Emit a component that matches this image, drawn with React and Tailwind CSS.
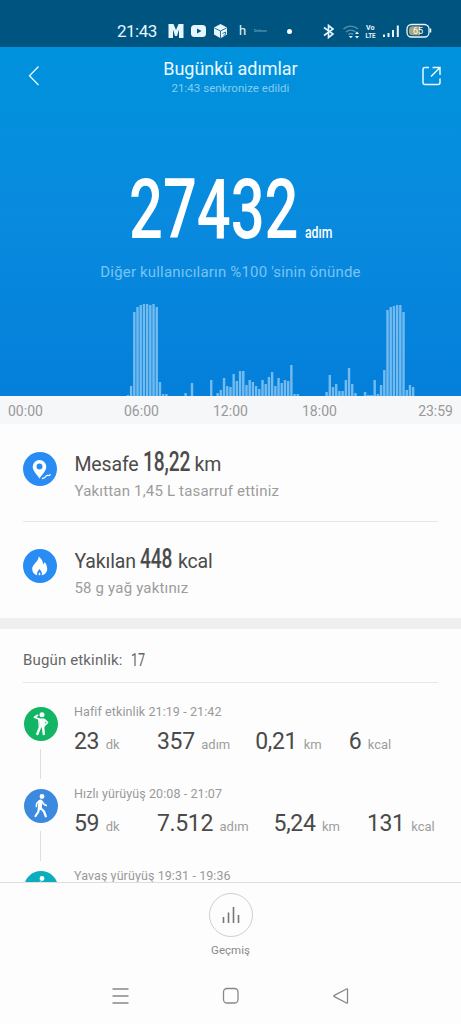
import clsx from "clsx";

const BAR_STEP = 3.205;

// [slot, heights...] runs of consecutive ten-minute bars
const RUNS = [
    [40, 1, 10, 84, 89, 91, 92, 92, 91, 92, 89, 14, 2, 2],
    [58, 3],
    [60, 13],
    [66, 16],
    [68, 3, 6, 18, 10, 9, 22, 15, 25, 25, 11, 16, 14, 10, 7, 16, 12, 19, 24, 10, 18, 13, 16, 15, 31, 2, 2],
    [102, 4, 21, 9, 12, 5, 5, 16, 28, 12, 3],
    [114, 4, 1, 1, 16, 2, 11, 26, 86, 89, 90, 91, 91, 84, 6, 11, 9],
];

const BARS = RUNS.flatMap(([start, ...heights]) => heights.map((h, i) => ({ slot: start + i, h })));

const ACTIVITIES = [
    { title: "Hafif etkinlik 21:19 - 21:42", color: "bg-[#12b564]", icon: "stretch", values: ["23", "357", "0,21", "6"] },
    { title: "Hızlı yürüyüş 20:08 - 21:07", color: "bg-[#3b8ae0]", icon: "walk", values: ["59", "7.512", "5,24", "131"] },
    { title: "Yavaş yürüyüş 19:31 - 19:36", color: "bg-[#0cadbd]", icon: "walk", values: [] },
];

const UNITS = ["dk", "adım", "km", "kcal"];

function StatusBar() {
    return (
        <div className="flex h-[47px] shrink-0 items-center bg-[#005580] pt-[15px] pl-[117px] text-[#e6f6ff]">
            <span className="w-[51px] text-[17px] leading-8 tracking-[-0.5px]">21:43</span>
            <svg width="74" height="32" viewBox="168 15 74 32" fill="currentColor">
                <path d="M168.500 24h5l2.500 6 2.500-6h5v14h-4.500V29.500l-2 6.500h-2l-2-6.500V38h-4.500z"/>
                <rect x="191" y="25" width="15" height="12" rx="3.500"/>
                <path d="M197 28.500v5l4.500-2.500z" fill="#005580"/>
                <path d="M220.500 24l6.500 3.500v7l-6.500 3.800-6.500-3.800v-7z"/>
                <path d="M214.500 28l6 3 6-3M220.500 31v7M222.500 33.500l3-1.500v2.500l-2 1" stroke="#005580" strokeWidth="0.8" fill="none"/>
            </svg>
            <span className="w-[15px] text-[13px] leading-8 -ml-[3px]">h</span>
            <span className="mr-[18px] w-[15px] text-[4px] text-[#8fbdd2]">Defcon</span>
            <span className="mr-[28px] size-[5px] rounded-full bg-white"/>
            <svg width="114" height="32" viewBox="320 15 114 32" fill="none" stroke="currentColor">
                <path d="M324 27.500l9 6.500-4.500 3.500v-12l4.500 3.500-9 6.500" strokeWidth="1.600"/>
                <g strokeWidth="1.400" stroke="#4d93b3">
                    <path d="M343.500 29a10.500 10.500 0 0 1 14.500 0M346 32a7 7 0 0 1 9.500 0"/>
                    <path d="M348.300 34.500a4 4 0 0 1 5 0"/>
                </g>
                <path d="M350.800 38.300l-2-2.300h4z M357 31.500l2 2.500h-4z M357 38.500l2-2.500h-4z" fill="currentColor" stroke="none"/>
                <text x="366" y="29.800" fontSize="7" fontWeight="700" fill="currentColor" stroke="none" textLength="8.500" lengthAdjust="spacingAndGlyphs">Vo</text>
                <text x="365.500" y="38" fontSize="7" fontWeight="700" fill="currentColor" stroke="none" textLength="10" lengthAdjust="spacingAndGlyphs">LTE</text>
                <path d="M384 34.500v2.500M388.500 33v4M393 30v7M397.800 25.500V37" strokeWidth="2"/>
                <rect x="407" y="24.500" width="22" height="12.500" rx="4.500" strokeWidth="1.300"/>
                <path d="M412.500 26.200h7.500v9h-7.500a3.500 3.500 0 0 1-3.500-3.500v-2A3.500 3.500 0 0 1 412.500 26.200z" fill="#a9a27a" stroke="none"/>
                <path d="M430.500 28.500v4" strokeWidth="1.500"/>
                <text x="413" y="34" fontSize="9" fill="white" stroke="none">65</text>
            </svg>
        </div>
    );
}

function Header() {
    return (
        <header className="flex h-[57px] items-start justify-between pl-[27px] pr-[18px] text-[#e9f9ff]">
            <svg className="mt-[18px]" width="15" height="22" fill="none" stroke="currentColor" strokeWidth="1.300">
                <path d="M11.500 1.500L2.500 10.700l9 9.300"/>
            </svg>
            <div className="-ml-[2px] flex flex-col items-center pt-[11px]">
                <h1 className="text-[18px] leading-[22px] tracking-[-0.050px]">Bugünkü adımlar</h1>
                <p className="text-[11.500px] leading-[17px] tracking-[0.030px] text-[#83cdf2]">21:43 senkronize edildi</p>
            </div>
            <svg className="mt-[18px]" width="22" height="22" fill="none" stroke="currentColor" strokeWidth="1.500">
                <path d="M8 2.500H4Q2 2.500 2 4.500V17.500Q2 19.500 4 19.500H17Q19 19.500 19 17.500V13.500M11.500 2.500H19V10M19 2.500L10 11.500"/>
            </svg>
        </header>
    );
}

function StepChart() {
    return (
        <svg className="mt-auto block" width="461" height="93" fill="#73bbef">
            {BARS.map(({ slot, h }) => (
                <rect key={slot} x={slot * BAR_STEP - 1.5} y={93 - h} width="2.400" height={h}/>
            ))}
        </svg>
    );
}

function StatIcon({ children }) {
    return (
        <span className="mt-[6px] flex size-[34px] shrink-0 items-center justify-center rounded-full bg-[#298cf5]">
            <svg width="34" height="34" viewBox="0 0 34 34" fill="white">{children}</svg>
        </span>
    );
}

function Stat({ icon, label, value, unit, note, narrow, className }) {
    return (
        <div className={clsx("flex", className)}>
            {icon}
            <div className="ml-[17.500px]">
                <div className="flex h-[32px] items-baseline text-[19.500px] leading-[32px] tracking-[-0.150px] text-[#4b4b4b]">
                    <span>{label}</span>
                    <span className={clsx("ml-[4px] inline-block", narrow)}>
                        <span className="inline-block origin-left scale-x-[0.710] text-[27px] leading-[32px] font-medium">{value}</span>
                    </span>
                    <span className="ml-[5px]">{unit}</span>
                </div>
                <p className="mt-[2px] text-[15px] leading-[22px] tracking-[0.180px] text-[#9c9c9c]">{note}</p>
            </div>
        </div>
    );
}

function ActivityIcon({ name }) {
    if (name === "stretch") {
        return (
            <svg width="34" height="34" viewBox="0 0 34 34" fill="none" stroke="white" strokeLinecap="round" strokeLinejoin="round">
                <circle cx="18" cy="7.700" r="2.500" fill="white" stroke="none"/>
                <path d="M15 12h5l1 2-.8 6h-4.700z" fill="white" strokeWidth="1"/>
                <path d="M15.500 12.300l-5-2 3-2M20.500 12.500l3 3-3 3" strokeWidth="1.700"/>
                <path d="M16.300 19.500L13.300 27M19 19.500l.8 7.500" strokeWidth="2.400"/>
            </svg>
        );
    }
    return (
        <svg width="34" height="34" viewBox="0 0 34 34" fill="none" stroke="white" strokeLinecap="round" strokeLinejoin="round">
            <circle cx="18" cy="7.500" r="2.400" fill="white" stroke="none"/>
            <path d="M16.500 12.500l-.8 6.500" strokeWidth="4"/>
            <path d="M15 12l-2.300 2.500-.4 3M18 12.500l2 2.700 2.200 1.300" strokeWidth="1.600"/>
            <path d="M15 19.500l-.8 3.500-2.700 4M16.500 19l3.500 3.500 1.800 4.800" strokeWidth="2.200"/>
        </svg>
    );
}

function Activity({ title, color, icon, values, last }) {
    return (
        <div className="flex h-[82px]">
            <div className="flex w-[35px] shrink-0 flex-col items-center">
                <span className={clsx("size-[34px] shrink-0 rounded-full", color)}><ActivityIcon name={icon}/></span>
                {!last && <span className="mt-[8px] h-[30px] w-px bg-[#dedede]"/>}
            </div>
            <div className="ml-[16px] -mt-[4px]">
                <p className="text-[12.500px] leading-[18px] tracking-[0.090px] whitespace-nowrap text-[#999]">{title}</p>
                <div className="flex pt-[2px]">
                    {values.map((value, i) => (
                        <div
                            key={UNITS[i]}
                            className={clsx(
                                "flex items-baseline whitespace-nowrap",
                                i === 0 && "w-[83px]",
                                i === 1 && "mr-[25px]",
                                i === 2 && "mr-[27px]"
                            )}
                        >
                            <span className="text-[23px] leading-[38px] tracking-[-0.350px] text-[#4a4a4a]">{value}</span>
                            <span className="ml-[6.500px] text-[13px] text-[#9e9e9e]">{UNITS[i]}</span>
                        </div>
                    ))}
                </div>
            </div>
        </div>
    );
}

function BottomBar() {
    return (
        <footer className="flex h-[142px] shrink-0 flex-col items-center border-t border-[#dedede] bg-[#fdfdfd]">
            <button className="mt-[10px] flex size-[44px] shrink-0 items-center justify-center rounded-full border border-[#cfcfcf]">
                <svg width="20" height="20" stroke="#777" strokeWidth="1.600">
                    <path d="M2.500 12v6M7.500 7.500V18M12.500 2v16M17.500 10v8"/>
                </svg>
            </button>
            <span className="mt-[4px] text-[11.500px] leading-[18px] text-[#8a8a8a]">Geçmiş</span>
            <nav className="mt-[27px] flex w-full items-center justify-between px-[111px]">
                <svg width="18" height="20" stroke="#888" strokeWidth="1.300">
                    <path d="M1.500 3h16M1.500 10h16M1.500 17h16"/>
                </svg>
                <svg width="18" height="20" fill="none" stroke="#888" strokeWidth="1.300">
                    <rect x="1.500" y="2.500" width="14.500" height="14.500" rx="3.500"/>
                </svg>
                <svg width="18" height="20" fill="none" stroke="#888" strokeWidth="1.300" strokeLinejoin="round">
                    <path d="M15.500 3.500v13q0 1-1 .5L2.300 10.700q-1-.7 0-1.400L14.500 3q1-.5 1 .5z"/>
                </svg>
            </nav>
        </footer>
    );
}

export default function App() {
    return (
        <div className="flex h-[1024px] w-[461px] flex-col overflow-hidden bg-[#fdfdfd] font-['Roboto',sans-serif]">
            <StatusBar/>

            <section className="flex h-[349px] shrink-0 flex-col bg-linear-to-b from-[#0092dc] via-[#098ade] to-[#047fda]">
                <Header/>
                <div className="mt-[57px] flex h-[98px] items-baseline pl-[129px] text-white">
                    <span className="w-[168px]">
                        <span className="inline-block origin-left scale-x-[0.710] text-[84px] leading-[98px] font-medium">27432</span>
                    </span>
                    <span className="ml-[8px] w-[30px]">
                        <span className="inline-block origin-left scale-x-[0.720] text-[17px] font-medium">adım</span>
                    </span>
                </div>
                <p className="mt-[2px] text-center text-[15px] leading-[22px] tracking-[0.180px] text-[#78c4f3]">
                    Diğer kullanıcıların %100 'sinin önünde
                </p>
                <StepChart/>
            </section>

            <div className="flex h-[28px] shrink-0 items-center bg-[#f6f7f9] pt-[2px] pr-[8px] pl-[8px] text-[14px] text-[#999]">
                <span className="w-[116px]">00:00</span>
                <span className="w-[89px]">06:00</span>
                <span className="w-[89px]">12:00</span>
                <span>18:00</span>
                <span className="ml-auto">23:59</span>
            </div>

            <section className="h-[194px] shrink-0 px-[23px]">
                <Stat
                    className="h-[98px] border-b border-[#e6e6e6] pt-[22px]"
                    label="Mesafe"
                    value="18,22"
                    unit="km"
                    note="Yakıttan 1,45 L tasarruf ettiniz"
                    narrow="w-[47px]"
                    icon={
                        <StatIcon>
                            <path fillRule="evenodd" d="M16.500 8a6.800 6.800 0 0 1 6.800 6.800c0 4-4.300 8-6.800 11.700-2.500-3.700-6.800-7.700-6.800-11.700a6.800 6.800 0 0 1 6.800-6.800zm0 3.600a3 3 0 1 0 0 6 3 3 0 0 0 0-6z"/>
                            <path d="M19 26.500q2.500 0 3.500-1.800t3-1.200q1.500 0 2-1.300" fill="none" stroke="white" strokeWidth="1.300"/>
                        </StatIcon>
                    }
                />
                <Stat
                    className="pt-[21px]"
                    label="Yakılan"
                    value="448"
                    unit="kcal"
                    note="58 g yağ yaktınız"
                    narrow="w-[33px]"
                    icon={
                        <StatIcon>
                            <path d="M15.800 7.500c3.200 2.500 4.200 5 4.200 8l1.800-2.200c1.700 2 2.400 4.500 2.400 6.700 0 3.200-2.200 5.700-5.500 6.300.9-2.600-.6-4.300-2.200-6.300-1.600 2-3.100 3.700-2.200 6.300-3.200-.8-5.100-3.200-5.100-6.300 0-4.800 6-6.800 6.600-12.500z"/>
                            <path d="M16.500 23.300c1.300 1.200 1.300 2.300 0 3.300-1.300-1-1.300-2.100 0-3.300z"/>
                        </StatIcon>
                    }
                />
            </section>

            <div className="h-[11px] shrink-0 bg-[#efeff0]"/>

            <section className="min-h-0 flex-1 overflow-hidden px-[23px]">
                <div className="flex h-[54px] items-center border-b border-[#e6e6e6] pt-[9px] text-[15px] text-[#666]">
                    <span className="tracking-[0.150px]">Bugün etkinlik:</span>
                    <span className="ml-[8px] inline-block origin-left scale-x-[0.720] text-[17.500px]">17</span>
                </div>
                <div className="pt-[24px]">
                    {ACTIVITIES.map((activity, i) => (
                        <Activity key={activity.title} {...activity} last={i === ACTIVITIES.length - 1}/>
                    ))}
                </div>
            </section>

            <BottomBar/>
        </div>
    );
}
